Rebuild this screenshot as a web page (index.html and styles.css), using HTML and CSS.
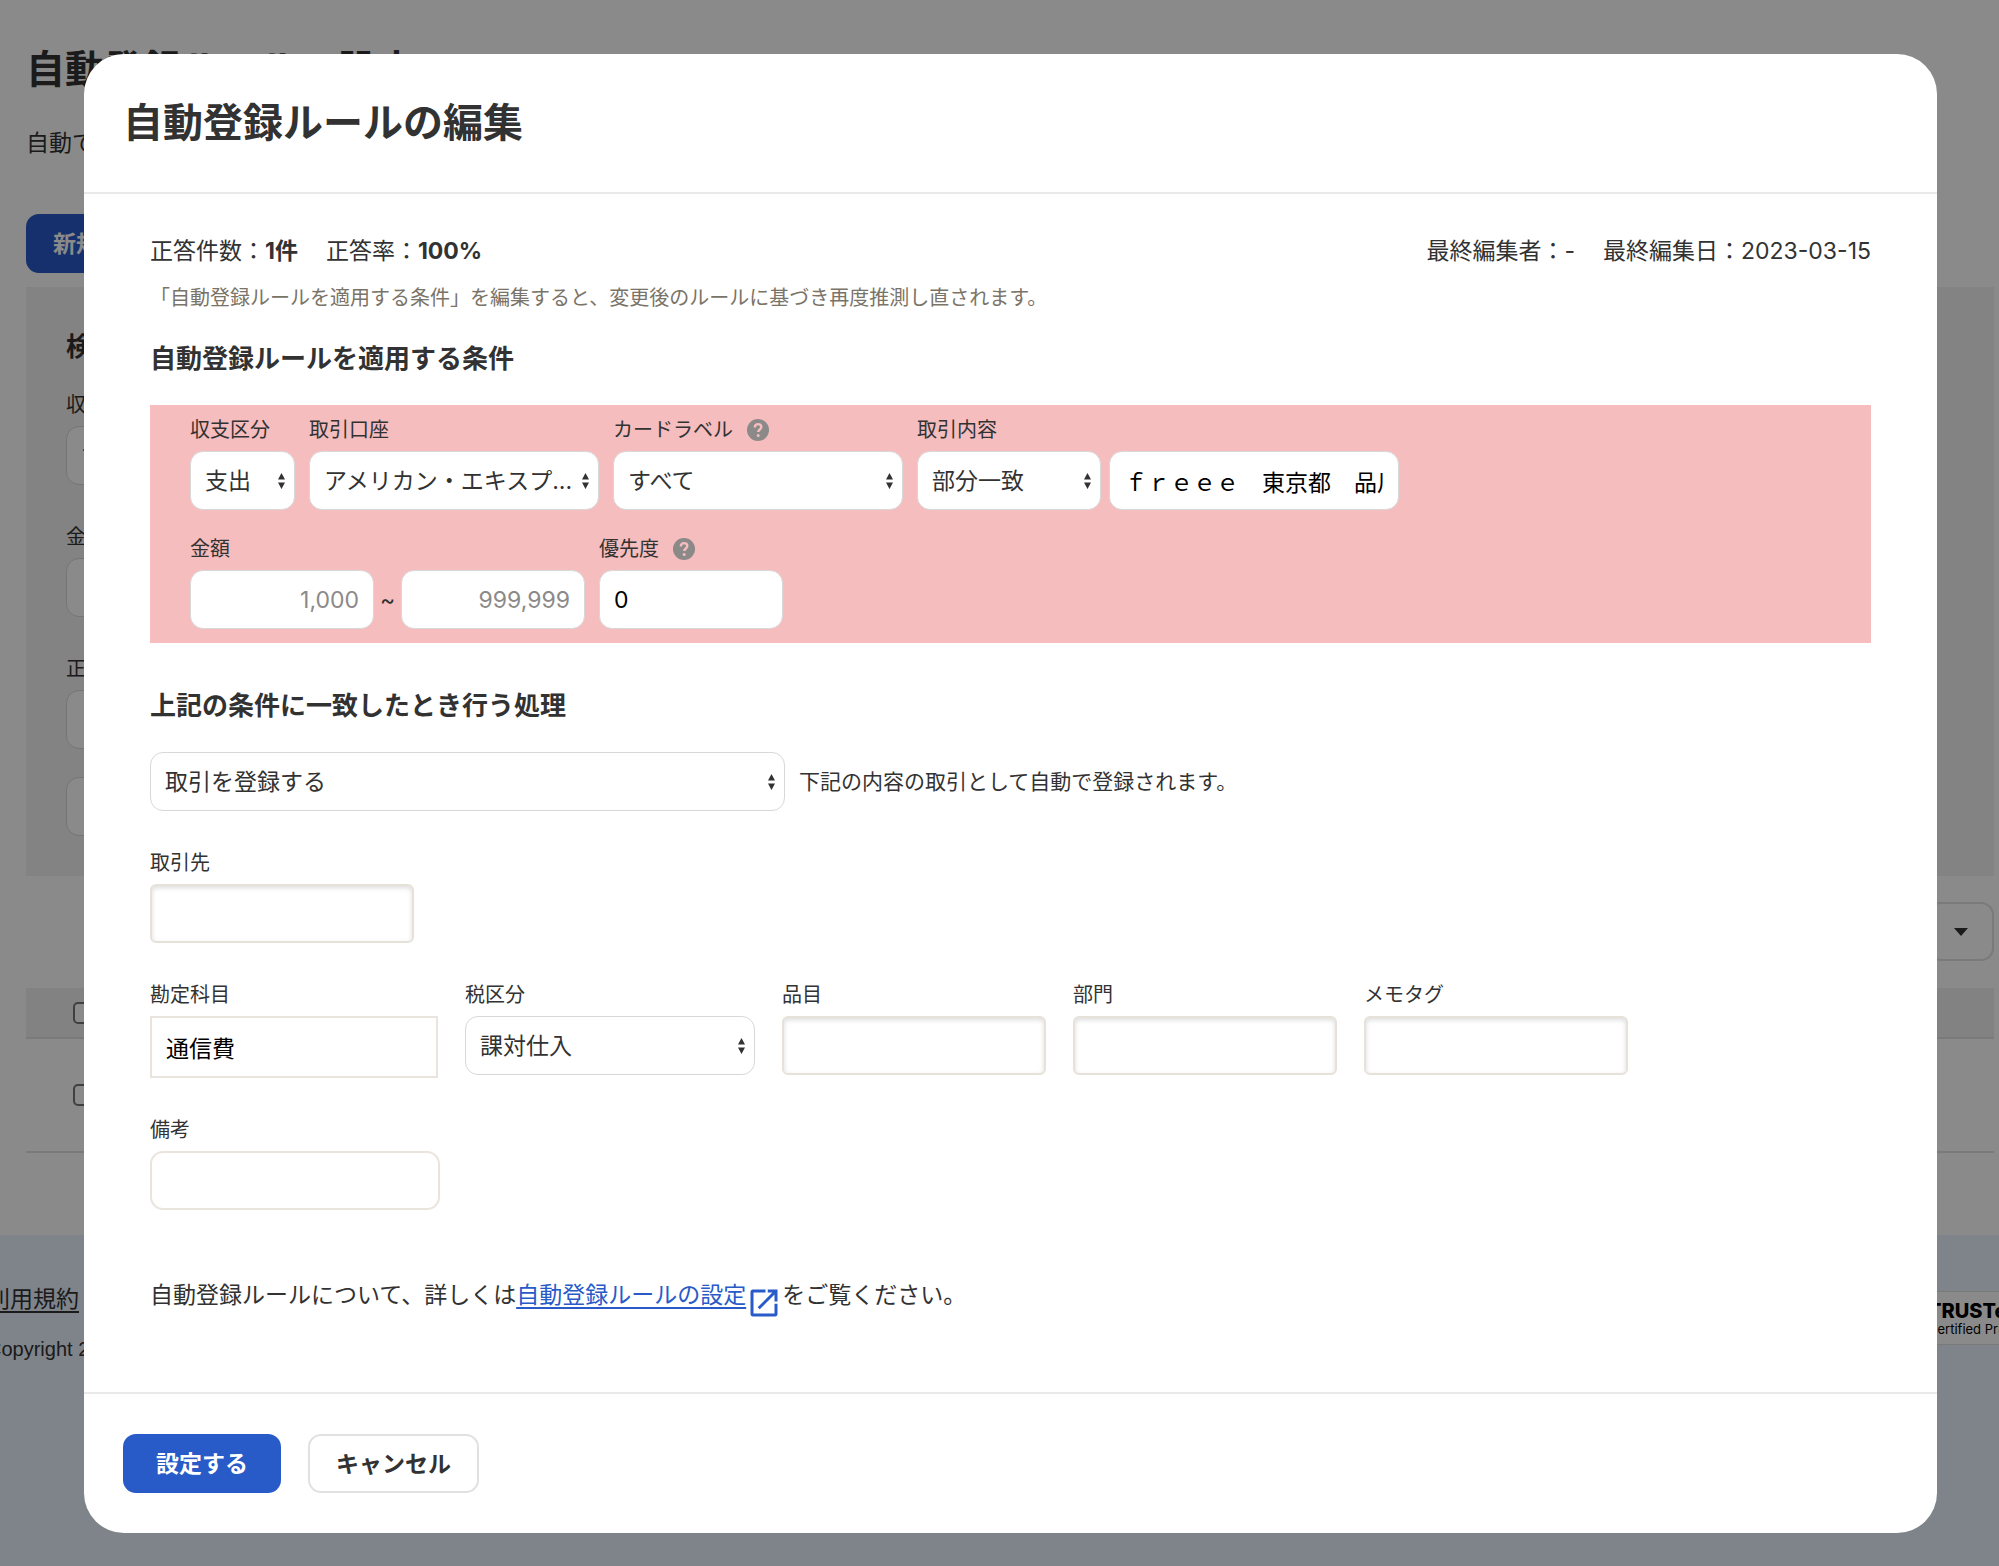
FILE: index.html
```html
<!DOCTYPE html>
<html lang="ja">
<head>
<meta charset="utf-8">
<meta name="viewport" content="width=device-width, initial-scale=1">
<title>自動登録ルールの編集</title>
<link rel="stylesheet" href="styles.css">
</head>
<body>
<div class="page">
  <main class="content">
    <h1 class="page-title">自動登録ルールの設定</h1>
    <p class="page-lead">自動で登録するルールを設定します。</p>
    <button type="button" class="btn btn-primary page-new">新規作成</button>

    <section class="search">
      <h2 class="search-title">検索条件</h2>
      <div class="search-field">
        <label class="label" for="s-type">収支区分</label>
        <select class="control select w-md" id="s-type"><option>すべて</option></select>
      </div>
      <div class="search-field">
        <label class="label" for="s-amount">金額</label>
        <input class="control w-md" id="s-amount" type="text">
      </div>
      <div class="search-field">
        <label class="label" for="s-rate">正答率</label>
        <input class="control w-md" id="s-rate" type="text">
        <input class="control w-md search-extra" type="text" aria-label="正答率の上限">
      </div>
    </section>

    <div class="list-tools">
      <button type="button" class="btn btn-default list-menu" aria-label="一覧の操作">
        <svg width="14" height="8" viewBox="0 0 14 8" aria-hidden="true"><path d="M0 0h14L7 8z" fill="currentColor"/></svg>
      </button>
    </div>

    <table class="list">
      <thead>
        <tr><th><input class="check" type="checkbox" aria-label="すべて選択"></th></tr>
      </thead>
      <tbody>
        <tr><td><input class="check" type="checkbox" aria-label="ルールを選択"></td></tr>
      </tbody>
    </table>
  </main>

  <footer class="site-footer">
    <div class="site-links">
      <a class="site-link" href="#">利用規約</a>
      <p class="copyright">Copyright 2023</p>
    </div>
    <div class="badge">
      <span class="badge-name">TRUSTe</span>
      <span class="badge-note">Certified Privacy</span>
    </div>
  </footer>
</div>

<div class="overlay">
  <div class="modal" role="dialog" aria-modal="true" aria-labelledby="modal-title">
    <header class="modal-head">
      <h2 class="modal-title" id="modal-title">自動登録ルールの編集</h2>
    </header>

    <form class="modal-body" id="rule-form">
      <div class="meta">
        <div class="meta-group">
          <span>正答件数：<b>1件</b></span>
          <span>正答率：<b>100%</b></span>
        </div>
        <div class="meta-group">
          <span>最終編集者：-</span>
          <span>最終編集日：2023-03-15</span>
        </div>
      </div>
      <p class="note">「自動登録ルールを適用する条件」を編集すると、変更後のルールに基づき再度推測し直されます。</p>

      <h3 class="section-title">自動登録ルールを適用する条件</h3>
      <div class="conditions">
        <div class="row">
          <div class="field">
            <label class="label" for="type">収支区分</label>
            <select class="control select w-xs" id="type"><option>支出</option></select>
          </div>
          <div class="field">
            <label class="label" for="account">取引口座</label>
            <select class="control select w-md" id="account"><option>アメリカン・エキスプ...</option></select>
          </div>
          <div class="field">
            <div class="label-line">
              <label class="label" for="card">カードラベル</label>
              <svg class="help" viewBox="0 0 22 22" aria-hidden="true"><circle cx="11" cy="11" r="11" fill="#8c8989"/><path d="M7.8 8.400c0-2 1.400-3.300 3.300-3.300s3.200 1.200 3.200 2.900c0 2.500-3.100 2.500-3.100 5.100" fill="none" stroke="#f5bdbe" stroke-width="2.400"/><circle cx="11.200" cy="16.400" r="1.500" fill="#f5bdbe"/></svg>
            </div>
            <select class="control select w-md" id="card"><option>すべて</option></select>
          </div>
          <div class="field">
            <label class="label" for="match">取引内容</label>
            <div class="pair">
              <select class="control select w-sm" id="match"><option>部分一致</option></select>
              <input class="control w-md" type="text" aria-label="取引内容の文字列" value="ｆｒｅｅｅ　東京都　品川区">
            </div>
          </div>
        </div>
        <div class="row">
          <div class="field">
            <label class="label" for="amount-min">金額</label>
            <div class="range">
              <input class="control w-sm number" id="amount-min" type="text" placeholder="1,000">
              <span class="tilde">~</span>
              <input class="control w-sm number" type="text" aria-label="金額の上限" placeholder="999,999">
            </div>
          </div>
          <div class="field">
            <div class="label-line">
              <label class="label" for="priority">優先度</label>
              <svg class="help" viewBox="0 0 22 22" aria-hidden="true"><circle cx="11" cy="11" r="11" fill="#8c8989"/><path d="M7.8 8.400c0-2 1.400-3.300 3.300-3.300s3.200 1.200 3.200 2.900c0 2.500-3.100 2.500-3.100 5.100" fill="none" stroke="#f5bdbe" stroke-width="2.400"/><circle cx="11.200" cy="16.400" r="1.500" fill="#f5bdbe"/></svg>
            </div>
            <input class="control w-sm" id="priority" type="text" value="0">
          </div>
        </div>
      </div>

      <h3 class="section-title section-action">上記の条件に一致したとき行う処理</h3>
      <div class="action">
        <select class="control select w-lg" aria-label="行う処理"><option>取引を登録する</option></select>
        <span class="action-note">下記の内容の取引として自動で登録されます。</span>
      </div>

      <div class="row detail">
        <div class="field">
          <label class="label" for="partner">取引先</label>
          <input class="control inset" id="partner" type="text">
        </div>
      </div>
      <div class="row detail">
        <div class="field">
          <label class="label" for="item">勘定科目</label>
          <input class="control square" id="item" type="text" value="通信費">
        </div>
        <div class="field">
          <label class="label" for="tax">税区分</label>
          <select class="control select w-md" id="tax"><option>課対仕入</option></select>
        </div>
        <div class="field">
          <label class="label" for="product">品目</label>
          <input class="control inset" id="product" type="text">
        </div>
        <div class="field">
          <label class="label" for="section">部門</label>
          <input class="control inset" id="section" type="text">
        </div>
        <div class="field">
          <label class="label" for="tag">メモタグ</label>
          <input class="control inset" id="tag" type="text">
        </div>
      </div>
      <div class="row detail">
        <div class="field">
          <label class="label" for="remark">備考</label>
          <input class="control w-md warm" id="remark" type="text">
        </div>
      </div>

      <p class="guide">自動登録ルールについて、詳しくは<a class="guide-link" href="#">自動登録ルールの設定</a><svg class="external" viewBox="0 0 24 24" aria-hidden="true"><path d="M19 19H5V5h8V3H4.500C3.700 3 3 3.700 3 4.500v15c0 .8.7 1.500 1.500 1.500h15c.8 0 1.500-.7 1.500-1.500V12.500h-2zM14.500 3v2h3.090l-9.830 9.830 1.410 1.410L19 6.410V11h2V3z" fill="currentColor"/></svg>をご覧ください。</p>
    </form>

    <footer class="modal-foot">
      <button type="submit" form="rule-form" class="btn btn-primary">設定する</button>
      <button type="button" class="btn btn-default">キャンセル</button>
    </footer>
  </div>
</div>
</body>
</html>
```

FILE: styles.css
```css
* {
  box-sizing: border-box;
}

body {
  margin: 0;
  background: #fff;
  color: #323232;
  font: 23px/36px Inter, "Noto Sans CJK JP", sans-serif;
}

h1, h2, h3, p {
  margin: 0;
}

button, input, select {
  margin: 0;
  font: inherit;
}

/* Shared controls */

.label {
  display: block;
  font-size: 20px;
  line-height: 30px;
}

.control {
  display: block;
  height: 59px;
  padding: 0 14px;
  border: 1px solid #d8d8d8;
  border-radius: 13px;
  background-color: #fff;
  color: #000;
}

.control::placeholder {
  color: #8c8989;
  opacity: 1;
}

.select {
  appearance: none;
  padding-right: 20px;
  color: #323232;
  background-image: url("data:image/svg+xml,%3Csvg xmlns='http://www.w3.org/2000/svg' width='7' height='16' viewBox='0 0 7 16'%3E%3Cpath d='M0 6.500L3.500 0 7 6.500zM0 9.500L3.500 16 7 9.500z' fill='%23323232'/%3E%3C/svg%3E");
  background-repeat: no-repeat;
  background-position: right 9px center;
}

.w-xs { width: 105px; }
.w-sm { width: 184px; }
.w-md { width: 290px; }
.w-lg { width: 635px; }

.number {
  text-align: right;
}

.warm {
  border: 2px solid #e9e5de;
}

.inset {
  width: 264px;
  border: 2px solid #e6e2da;
  border-radius: 6px;
  box-shadow: inset 0 2px 5px rgba(0, 0, 0, 0.14);
}

.square {
  width: 288px;
  height: 62px;
  border: 2px solid #e9e5de;
  border-radius: 0;
}

.btn {
  height: 59px;
  border: 1px solid transparent;
  border-radius: 13px;
  font-weight: 700;
  cursor: pointer;
}

.btn-primary {
  padding: 0 32px;
  background: #285ac8;
  color: #fff;
}

.btn-default {
  padding: 0 26px;
  border: 2px solid #e1e1e1;
  background: #fff;
  color: #323232;
}

/* Page behind the dialog */

.page {
  display: flex;
  flex-direction: column;
  min-height: 100vh;
  color: #323232;
}

.content {
  padding: 39px 5px 82px 26px;
}

.page-title {
  font-size: 39px;
  line-height: 60px;
}

.page-lead {
  margin: 26px 0 53px;
}

.page-new {
  display: block;
  padding: 0 26px;
}

.search {
  margin-top: 14px;
  padding: 40px;
  background: #f3f3f3;
}

.search-title {
  font-size: 26px;
  line-height: 40px;
}

.search-field {
  display: flex;
  flex-direction: column;
  gap: 6px;
  margin-top: 37px;
}

.search-title + .search-field {
  margin-top: 23px;
}

.search-extra {
  margin-top: 22px;
}

.list-tools {
  display: flex;
  justify-content: flex-end;
  margin: 26px 0 27px;
}

.list-menu {
  display: flex;
  align-items: center;
  padding: 0 24px;
}

.list {
  width: 100%;
  border-collapse: collapse;
}

.list th,
.list td {
  padding: 0 47px;
  border-bottom: 2px solid #e1e1e1;
  text-align: left;
}

.list th {
  height: 50px;
  background: #f0f0f0;
}

.list td {
  height: 114px;
}

.check {
  display: block;
  appearance: none;
  width: 22px;
  height: 22px;
  border: 2px solid #767676;
  border-radius: 5px;
  background: #fff;
}

.site-footer {
  display: flex;
  flex: 1;
  align-items: flex-start;
  justify-content: space-between;
  overflow: hidden;
  background: #ebf3ff;
}

.site-links {
  margin-left: -13px;
  padding-top: 46px;
}

.site-link {
  display: block;
  color: inherit;
  text-underline-offset: 4px;
}

.copyright {
  margin-top: 17px;
  font: 20px/30px "Liberation Sans", Arial, sans-serif;
}

.badge {
  display: flex;
  flex-direction: column;
  width: 140px;
  margin: 56px -50px 0 0;
  padding: 8px 0 8px 18px;
  border: 1px solid #e1e1e1;
  background: #fff;
  color: #000;
}

.badge-name {
  font-size: 20px;
  font-weight: 800;
  line-height: 22px;
}

.badge-note {
  font-size: 13px;
  line-height: 14px;
  white-space: nowrap;
}

/* Dialog */

.overlay {
  position: absolute;
  inset: 0;
  padding: 54px 62px 33px 84px;
  background: rgba(0, 0, 0, 0.46);
}

.modal {
  border-radius: 40px;
  background: #fff;
}

.modal-head {
  padding: 40px 39px;
  border-bottom: 2px solid #e9e9e9;
}

.modal-title {
  font-size: 40px;
  line-height: 58px;
}

.modal-body {
  padding: 39px 66px 79px;
}

.meta,
.meta-group {
  display: flex;
  justify-content: space-between;
  gap: 28px;
}

.note {
  margin-top: 14px;
  color: #7a7367;
  font-size: 20px;
  line-height: 30px;
}

.section-title {
  margin: 26px 0;
  font-size: 26px;
  line-height: 40px;
}

.section-action {
  margin-top: 43px;
}

.conditions {
  display: flex;
  flex-direction: column;
  gap: 24px;
  padding: 10px 40px 14px;
  background: #f5bdbe;
}

.row {
  display: flex;
  align-items: flex-start;
  gap: 14px;
}

.field {
  display: flex;
  flex-direction: column;
  gap: 6px;
}

.label-line {
  display: flex;
  align-items: center;
  gap: 14px;
}

.help {
  width: 22px;
  height: 22px;
}

.pair {
  display: flex;
  gap: 8px;
}

.range {
  display: flex;
  align-items: center;
}

.tilde {
  width: 27px;
  text-align: center;
}

.action {
  display: flex;
  align-items: center;
  gap: 14px;
}

.action-note {
  font-size: 21px;
}

.detail {
  gap: 27px;
  margin-top: 37px;
}

.guide {
  display: flex;
  align-items: center;
  margin-top: 67px;
}

.guide-link {
  color: #285ac8;
  text-underline-offset: 4px;
}

.external {
  width: 36px;
  height: 36px;
  margin: 8px 0 -8px;
  color: #285ac8;
}

.modal-foot {
  display: flex;
  gap: 27px;
  padding: 40px 39px;
  border-top: 2px solid #e9e9e9;
}
```
